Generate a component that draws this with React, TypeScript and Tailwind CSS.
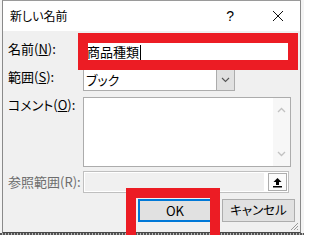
import React from 'react';

const jp = { fontFamily: '"Noto Sans CJK JP", "Noto Sans", sans-serif', fontFeatureSettings: '"palt"' };

function Label({ text, gray }: { text: React.ReactNode; gray?: boolean }) {
  return (
    <div className={`w-[80px] shrink-0 pl-[5px] text-[13px] leading-[15px] ${gray ? 'text-[#6d6d6d]' : 'text-black'}`}>
      {text}
    </div>
  );
}

export default function App() {
  return (
    <div className="relative h-[235px] w-[304px] overflow-hidden bg-[#f4f4f4]" style={jp}>
      <div className="ml-[2px] flex h-[233px] w-[299px] flex-col border border-b-[#4a4a4a] border-l-[#8a8a8a] border-r-[#8a8a8a] border-t-[#9a9a9a] bg-[#f0f0f0]">
        {/* title bar */}
        <div className="flex h-[30px] shrink-0 items-center bg-white">
          <span className="ml-[7px] text-[12px] text-black">新しい名前</span>
          <span className="ml-auto mr-[38px] text-[14px] text-black" style={{ fontFamily: '"Liberation Sans", sans-serif' }}>?</span>
          <svg width="12" height="12" viewBox="0 0 12 12" className="mr-[16px]">
            <path d="M1 1L11 11M11 1L1 11" stroke="#111" strokeWidth="1" />
          </svg>
        </div>

        {/* body */}
        <div className="flex flex-col pt-[10px]">
          <div className="flex h-[22px]">
            <Label text={<>名前(<span className="underline">N</span>):</>} />
            <div className="flex h-[22px] w-[208px] items-center border border-[#7a7a7a] bg-white pl-[3px] text-[13px]">
              商品種類
              <span className="ml-[1px] h-[15px] w-[1px] bg-black" />
            </div>
          </div>

          <div className="mt-[6px] flex h-[22px]">
            <Label text={<>範囲(<span className="underline">S</span>):</>} />
            <div className="flex h-[22px] w-[152px] border border-[#acacac] bg-white">
              <span className="flex-1 pl-[2px] text-[13px] leading-[20px]">ブック</span>
              <div className="flex w-[18px] items-center justify-center border-l border-[#acacac] bg-[#e1e1e1]">
                <svg width="9" height="6" viewBox="0 0 9 6">
                  <path d="M1 1L4.5 4.5L8 1" stroke="#555" strokeWidth="1.1" fill="none" />
                </svg>
              </div>
            </div>
          </div>

          <div className="mt-[6px] flex h-[70px]">
            <Label text={<>コメント(<span className="underline">O</span>):</>} />
            <div className="flex h-[70px] w-[208px] border border-[#acacac] bg-white">
              <div className="flex-1" />
              <div className="flex w-[17px] flex-col items-center justify-between bg-[#f7f7f7] py-[9px]">
                <svg width="9" height="6" viewBox="0 0 9 6">
                  <path d="M1 5L4.5 1.5L8 5" stroke="#c2c2c2" strokeWidth="1.3" fill="none" />
                </svg>
                <svg width="9" height="6" viewBox="0 0 9 6">
                  <path d="M1 1L4.5 4.5L8 1" stroke="#c2c2c2" strokeWidth="1.3" fill="none" />
                </svg>
              </div>
            </div>
          </div>

          <div className="mt-[4px] flex h-[22px]">
            <div className="w-[80px] shrink-0 pt-[3px]">
              <Label gray text="参照範囲(R):" />
            </div>
            <div className="flex h-[22px] w-[206px] shrink-0 items-center gap-[4px] border border-[#bfbfbf] bg-white p-[1px]">
              <div className="h-full flex-1 bg-[#f0f0f0]" />
              <div className="flex h-full w-[19px] items-center justify-center border border-[#adadad] bg-[#fbfbfb]">
                <svg width="11" height="11" viewBox="0 0 11 11">
                  <path d="M5.5 1L1.5 5H4V8H7V5H9.5Z" fill="#000" />
                  <rect x="1" y="9" width="9" height="1.5" fill="#000" />
                </svg>
              </div>
            </div>
          </div>

          <div className="mt-[6px] flex h-[23px] justify-end gap-[10px] pr-[5px]">
            <button className="h-[23px] w-[74px] border-2 border-[#0078d7] bg-[#e1e1e1] text-[13px] text-black">OK</button>
            <button className="h-[23px] w-[73px] border border-[#adadad] bg-[#e1e1e1] text-[12.5px] text-black">キャンセル</button>
          </div>
        </div>
      </div>

      {/* resize grip */}
      <svg width="10" height="10" viewBox="0 0 10 10" className="absolute left-[289px] top-[221px]">
        <path d="M9 2L2 9M9 5L5 9M9 8L8 9" stroke="#9a9a9a" strokeWidth="1" />
      </svg>

      {/* background below the window */}
      <div className="absolute bottom-0 left-0 h-[2px] w-full bg-[repeating-linear-gradient(90deg,#555_0px,#555_2px,#bbb_2px,#bbb_3px)]" />

      {/* red highlight boxes */}
      <div className="pointer-events-none absolute left-[78px] top-[33px] h-[37px] w-[220px] border-[10px] border-[#ec1c24]" />
      <div className="pointer-events-none absolute left-[126px] top-[188px] h-[50px] w-[94px] border-[10px] border-b-0 border-[#ec1c24]" />
    </div>
  );
}
